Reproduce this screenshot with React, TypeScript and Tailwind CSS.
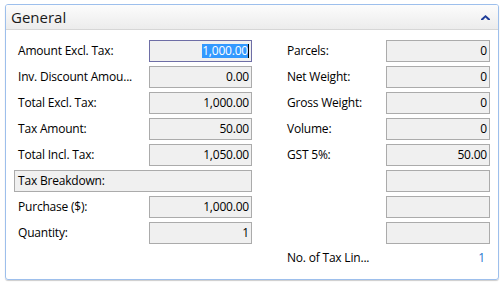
import React from 'react';

const leftRows = [
  { label: 'Amount Excl. Tax:', value: '1,000.00', focused: true },
  { label: 'Inv. Discount Amou...', value: '0.00' },
  { label: 'Total Excl. Tax:', value: '1,000.00' },
  { label: 'Tax Amount:', value: '50.00' },
  { label: 'Total Incl. Tax:', value: '1,050.00' },
];

const rightRows = [
  { label: 'Parcels:', value: '0' },
  { label: 'Net Weight:', value: '0' },
  { label: 'Gross Weight:', value: '0' },
  { label: 'Volume:', value: '0' },
  { label: 'GST 5%:', value: '50.00' },
  { label: '', value: '' },
  { label: '', value: '' },
  { label: '', value: '' },
];

function Field({ label, value, focused, labelW }: { label: string; value: string; focused?: boolean; labelW: string }) {
  return (
    <div className="flex items-center h-[22px]">
      <div className={`${labelW} shrink-0 whitespace-nowrap`}>{label}</div>
      <div
        className={`w-[104px] h-[22px] flex items-center justify-end pr-[2px] bg-[#f0f0f0] border ${
          focused ? 'border-[#6e6ea6]' : 'border-[#ababab]'
        }`}
      >
        {focused ? (
          <span className="flex items-center">
            <span className="bg-[#3399ff] text-white leading-[14px]">{value}</span>
            <span className="w-px h-[14px] bg-black" />
          </span>
        ) : (
          value
        )}
      </div>
    </div>
  );
}

export default function App() {
  return (
    <div className="w-[503px] h-[283px] bg-white pt-[4px] pl-[5px] font-['Open_Sans',sans-serif] text-[12px] text-black tracking-[-0.2px]">
      <div className="w-[494px] h-[276px] border border-[#9dbfec] rounded-[3px] shadow-[0_1px_1px_rgba(0,0,0,0.2)] overflow-hidden">
        <div className="h-[25px] flex items-center justify-between pl-[5px] pr-[8px] bg-gradient-to-b from-[#fcfcfc] to-[#ececec] border-b border-[#d6d6d6]">
          <span className="text-[15px] tracking-normal text-[#1a1a1a]">General</span>
          <svg width="9" height="5" viewBox="0 0 9 5" className="mt-[1px]">
            <path d="M4.5 0 L9 4 L9 5 L7 5 L4.5 2.5 L2 5 L0 5 L0 4 Z" fill="#1f3d99" />
          </svg>
        </div>
        <div className="flex pt-[10px] pl-[8px]">
          <div className="w-[238px] flex flex-col gap-[4px]">
            {leftRows.map((r) => (
              <div key={r.label} className="pl-[4px]">
                <Field label={r.label} value={r.value} focused={r.focused} labelW="w-[131px]" />
              </div>
            ))}
            <div className="h-[22px] flex items-center pl-[3px] bg-[#f0f0f0] border border-[#ababab]">Tax Breakdown:</div>
            <div className="pl-[4px]">
              <Field label="Purchase ($):" value="1,000.00" labelW="w-[131px]" />
            </div>
            <div className="pl-[4px]">
              <Field label="Quantity:" value="1" labelW="w-[131px]" />
            </div>
          </div>
          <div className="ml-[35px] w-[203px] flex flex-col gap-[4px]">
            {rightRows.map((r, i) => (
              <Field key={i} label={r.label} value={r.value} labelW="w-[99px]" />
            ))}
            <div className="flex items-center h-[18px] mt-[1px]">
              <div className="w-[99px] whitespace-nowrap">No. of Tax Lin...</div>
              <div className="w-[104px] text-right pr-[5px] text-[#2a78d0]">1</div>
            </div>
          </div>
        </div>
      </div>
    </div>
  );
}
